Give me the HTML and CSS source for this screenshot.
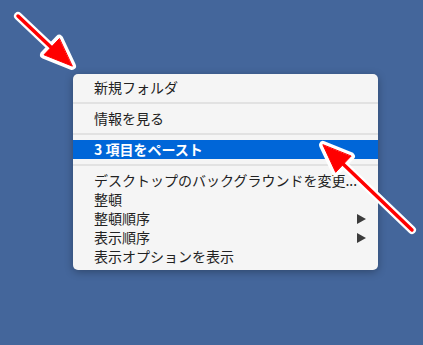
FILE: index.html
```html
<!DOCTYPE html>
<html lang="ja">
<head>
    <meta charset="UTF-8">
    <title>コンテキストメニュー</title>
    <link rel="stylesheet" href="styles.css">
</head>
<body>
    <div class="context-menu">
        <div class="menu-item">新規フォルダ</div>
        <div class="menu-separator"></div>
        <div class="menu-item">情報を見る</div>
        <div class="menu-separator"></div>
        <div class="menu-item selected">3 項目をペースト</div>
        <div class="menu-separator"></div>
        <div class="menu-item">デスクトップのバックグラウンドを変更...</div>
        <div class="menu-item">整頓</div>
        <div class="menu-item">整頓順序<span class="submenu-arrow"></span></div>
        <div class="menu-item">表示順序<span class="submenu-arrow"></span></div>
        <div class="menu-item">表示オプションを表示</div>
    </div>

    <!-- 注釈の矢印 -->
    <svg class="annotations" width="423" height="345" viewBox="0 0 423 345">
        <g stroke="#fff" stroke-width="8" stroke-linecap="round" stroke-linejoin="round" fill="#fff">
            <line x1="18" y1="16" x2="55" y2="51"/>
            <polygon points="72,66 44,54.8 59.2,38.8"/>
            <line x1="412" y1="230" x2="340" y2="161"/>
            <polygon points="323,145 335.7,172.3 350.9,156.3"/>
        </g>
        <g stroke="#f00" stroke-width="3.5" stroke-linecap="round" stroke-linejoin="round" fill="#f00">
            <line x1="18" y1="16" x2="55" y2="51"/>
            <polygon stroke-width="1" points="72,66 44,54.8 59.2,38.8"/>
            <line x1="412" y1="230" x2="340" y2="161"/>
            <polygon stroke-width="1" points="323,145 335.7,172.3 350.9,156.3"/>
        </g>
    </svg>
</body>
</html>
```

FILE: styles.css
```css
body {
    margin: 0;
    width: 423px;
    height: 345px;
    overflow: hidden;
    background: #44669b;
    font-family: "Noto Sans CJK JP", "Liberation Sans", sans-serif;
}

.context-menu {
    width: 305px;
    margin: 74px 0 0 73px;
    padding: 4px 0;
    background: #f5f5f5;
    border-radius: 5px;
    box-shadow: 0 2px 8px rgba(0, 0, 0, 0.3);
}

.menu-item {
    display: flex;
    align-items: center;
    justify-content: space-between;
    height: 19px;
    padding: 0 12px 0 21px;
    font-size: 14px;
    line-height: 19px;
    color: #222;
    white-space: nowrap;
}

.menu-item.selected {
    background: #0066d8;
    color: #fff;
    font-weight: bold;
}

.menu-separator {
    height: 2px;
    margin: 5px 0;
    background: #e2e2e2;
}

.submenu-arrow {
    width: 0;
    height: 0;
    border-left: 9px solid #3c3c3c;
    border-top: 5.5px solid transparent;
    border-bottom: 5.5px solid transparent;
}

.annotations {
    position: absolute;
    left: 0;
    top: 0;
}
```
